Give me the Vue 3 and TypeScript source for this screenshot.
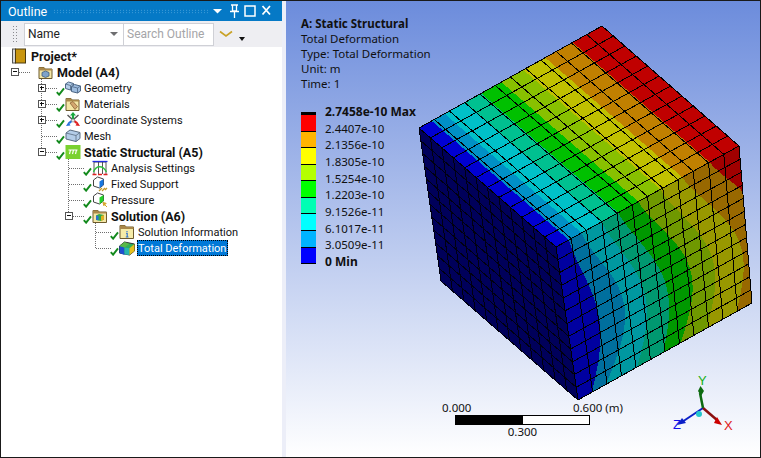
<template>
  <div class="window">
    <!-- Outline panel -->
    <aside class="outline">
      <header class="title-bar">
        <span class="title-text">Outline</span>
        <span class="title-grip" />
        <svg class="title-icons" width="62" height="18" viewBox="0 0 62 18">
          <path d="M0 7h9l-4.500 4.500z" fill="#fff" />
          <path d="M18 3h7M19.500 3v6h4V3M17 9.500h9M21.500 10v6" fill="none" stroke="#fff" stroke-width="1.300" />
          <rect x="32" y="4" width="10" height="10" fill="none" stroke="#fff" stroke-width="1.500" />
          <path d="M49.500 4l7.500 8.500M57 4l-7.500 8.500" stroke="#fff" stroke-width="1.800" />
        </svg>
      </header>

      <div class="toolbar">
        <span class="grip" />
        <div class="combo">
          <span>Name</span>
          <i class="combo-arrow" />
        </div>
        <div class="search">Search Outline</div>
        <svg class="chevron" width="14" height="8" viewBox="0 0 14 8">
          <path d="M1 1.500l6 4.500 6-4.500" fill="none" stroke="#c9a227" stroke-width="1.600" />
        </svg>
        <svg class="drop" width="8" height="4" viewBox="0 0 8 4">
          <path d="M1 0h6L4 4z" fill="#111" />
        </svg>
      </div>

      <div class="tree">
        <svg class="tree-guides" width="281" height="220">
          <line
            v-for="(g, i) in guides"
            :key="i"
            :x1="g.x1"
            :y1="g.y1"
            :x2="g.x2"
            :y2="g.y2"
            stroke="#6e6e6e"
            stroke-dasharray="1 1"
            shape-rendering="crispEdges"
          />
        </svg>

        <div
          v-for="row in rows"
          :key="row.label"
          class="row"
          :style="{ paddingLeft: rowIndent(row.depth) + 'px' }"
        >
          <span v-if="row.depth > 0" class="expander-slot">
            <span v-if="row.toggle" class="expander">
              <i class="bar-h" />
              <i v-if="row.toggle === 'plus'" class="bar-v" />
            </span>
          </span>
          <span v-if="row.depth > 0" class="check-slot">
            <svg v-if="row.done" width="9" height="9" viewBox="0 0 9 9">
              <path d="M0.800 5.200l2.300 2.500L8 1.300" fill="none" stroke="#138a1d" stroke-width="1.900" />
            </svg>
          </span>
          <span class="icon-slot">
            <svg width="16" height="16" viewBox="0 0 16 16">
              <g v-if="row.icon === 'project'">
                <rect x="0.500" y="1" width="3" height="14" fill="#d8d8d8" stroke="#555" />
                <rect x="3.500" y="1" width="10" height="14" fill="#c9960f" stroke="#4b3a10" />
              </g>
              <g v-else-if="row.icon === 'folder'">
                <path d="M1 3.500h5l1 1.500h7v9.500H1z" fill="#f4e6a6" stroke="#6d5a2c" />
                <path d="M1 3.500h5l1 1.500h7v1.500H1z" fill="#a9884a" />
                <path d="M7.500 7l3.500 1.500v3.500l-3.500 1.500L4 12V8.500z" fill="#7fa3c9" stroke="#3f5a78" stroke-width="0.800" />
              </g>
              <g v-else-if="row.icon === 'geometry'">
                <path d="M0.500 4l3-2 5 1.500v4.500l-3 2-5-1.500z" fill="#b4cde8" stroke="#4b6584" />
                <path d="M0.500 4l5 1.500 3-2M5.500 5.500V10" fill="none" stroke="#4b6584" stroke-width="0.800" />
                <path d="M6.500 6.500l3-2 6 1.500v5l-3 2-6-1.500z" fill="#9dbcdf" stroke="#4b6584" />
                <path d="M6.500 6.500l6 1.500 3-2M12.500 8v5" fill="none" stroke="#4b6584" stroke-width="0.800" />
              </g>
              <g v-else-if="row.icon === 'materials'">
                <path d="M1 2.500h5l1 1.500h7v10.500H1z" fill="#f4e6a6" stroke="#6d5a2c" />
                <path d="M1 2.500h5l1 1.500h7v1.500H1z" fill="#a9884a" />
                <path d="M5 7l3-1.500 4.500 5-2.500 3z" fill="#d3a66f" stroke="#8a6236" stroke-width="0.800" />
              </g>
              <g v-else-if="row.icon === 'axes'">
                <path d="M8 8L2.500 3M8 8l5.500-5" stroke="#555" stroke-width="1.400" />
                <path d="M8 8V2.500" stroke="#19a83e" stroke-width="2.200" />
                <path d="M8 0l3 3.500H5z" fill="#19a83e" />
                <path d="M8 8l4 3.200" stroke="#e01e1e" stroke-width="2.200" />
                <path d="M15 14l-4.500-.5 2-3.500z" fill="#e01e1e" />
                <path d="M8 8l-4 3.200" stroke="#2670d8" stroke-width="2.200" />
                <path d="M1 14l4.500-.5-2-3.500z" fill="#2670d8" />
                <circle cx="8" cy="8.500" r="1.600" fill="#e8e8e8" stroke="#777" stroke-width="0.500" />
              </g>
              <g v-else-if="row.icon === 'mesh'">
                <path d="M1 5l4-3 10 2.500v6l-4 3-10-2.500z" fill="#b4cde8" stroke="#5a6c80" />
                <path d="M1 5l10 2.500 4-3M11 7.500v6" fill="none" stroke="#5a6c80" stroke-width="0.800" />
              </g>
              <g v-else-if="row.icon === 'static'">
                <rect x="0.500" y="1" width="15" height="14" fill="#7ad12f" />
                <path d="M3.500 6h9M5.500 6l-1 4M8.500 6l-1 4M11.500 6l-1 4" fill="none" stroke="#fff" stroke-width="1.100" />
              </g>
              <g v-else-if="row.icon === 'analysis'">
                <path d="M2 2h12M2 2v12M6.500 2v12M10.500 2v12M14 2v12" fill="none" stroke="#444" stroke-width="0.900" />
                <path d="M0.500 1.500h15" stroke="#1f2ce0" stroke-width="1.300" />
                <path d="M0.500 14.500h4M6 14.500h4M11.500 14.500h4" stroke="#e02020" stroke-width="1.300" />
                <path d="M1.500 12C4 5 11 5 14.500 12" fill="none" stroke="#2bbf3d" stroke-width="1.400" />
              </g>
              <g v-else-if="row.icon === 'fixed'">
                <path d="M1.500 4l4-3 6 2v6l-4 3-6-2z" fill="#fff" stroke="#444" />
                <path d="M7.500 5.500l4-2.500v6l-4 3z" fill="#1776e0" />
                <path d="M7 15l3-3M10 15l3-3M13 14l2-2" stroke="#c49a2a" stroke-width="1.300" />
              </g>
              <g v-else-if="row.icon === 'pressure'">
                <path d="M1.500 4l4-3 6 2v6l-4 3-6-2z" fill="#fff" stroke="#444" />
                <path d="M7.500 5.500l4-2.500v6l-4 3z" fill="#23d12a" />
                <path d="M15 15l-3-3M11 10.500l3.200.8-2.400 2.400z" stroke="#d3a62a" fill="#d3a62a" />
              </g>
              <g v-else-if="row.icon === 'solution'">
                <path d="M1 2.500h5l1 1.500h7.500v10.500H1z" fill="#f4e6a6" stroke="#6d5a2c" />
                <path d="M1 2.500h5l1 1.500h7.500v1.500H1z" fill="#a9884a" />
                <path d="M4 7.500l3-1.500 5 1v4.500l-3 1.500-5-1z" fill="#2fa84a" />
                <path d="M9 8l3-1v4.500l-3 1.500z" fill="#e0b020" />
                <path d="M4 7.500l2.500.5v4.500l-2.500-1z" fill="#2a72d0" />
              </g>
              <g v-else-if="row.icon === 'info'">
                <path d="M1 1.500h5l1 1.500h7.500v11.500H1z" fill="#f6eca8" stroke="#6d5a2c" />
                <path d="M1 1.500h5l1 1.500h7.500v2H1z" fill="#a9884a" />
                <path d="M8 7v1M7 9.300h1.200v3.500M6.800 13h2.700" fill="none" stroke="#2a6fd0" stroke-width="1.100" />
              </g>
              <g v-else>
                <path d="M0.500 6l5-4 10 2v7l-5 4-10-2z" fill="#2fb05a" stroke="#333" />
                <path d="M0.500 6l5 1.500V15l-5-2z" fill="#1f4fd0" />
                <path d="M5.500 7.500l5 .8V15l-5-.5z" fill="#28b6b0" />
                <path d="M10.500 8.300l5-4.300v7l-5 4z" fill="#e6c01f" />
                <path d="M5.500 2l5 2-5 3.500-5-1.500z" fill="#5ab848" />
              </g>
            </svg>
          </span>
          <span class="label" :class="{ bold: row.bold, selected: row.selected }">{{ row.label }}</span>
        </div>
      </div>
    </aside>

    <div class="splitter" />

    <!-- Graphics viewport -->
    <main class="viewport">
      <svg class="model" viewBox="286 1 474 456" width="474" height="456">
        <polygon :points="pts(leftFace)" fill="#00005a" />
        <path :d="leftMesh" fill="none" stroke="#000010" stroke-width="1" shape-rendering="crispEdges" />

        <polygon
          v-for="band in topBands"
          :key="'t' + band.color"
          :points="band.points"
          :fill="band.color"
          shape-rendering="crispEdges"
        />
        <polygon
          v-for="band in rightBands"
          :key="'r' + band.color"
          :points="band.points"
          :fill="band.color"
          shape-rendering="crispEdges"
        />

        <path :d="meshPath" fill="none" stroke="#000" stroke-width="1" shape-rendering="crispEdges" />

        <!-- triad -->
        <path d="M703 408L682 422" stroke="#0a1fc8" stroke-width="2" />
        <path d="M677 425l5-7 4 5z" fill="#0a1fc8" />
        <path d="M703 408L717 420" stroke="#8a1010" stroke-width="2.500" />
        <path d="M722 425l-8-2 3-6z" fill="#cc0000" />
        <path d="M703 408L700 393" stroke="#0c6a10" stroke-width="2.500" />
        <path d="M700.500 386l3.500 5-3 5-3-5z" fill="#0c6a10" />
        <circle cx="699" cy="414" r="3" fill="#22c6cc" />
        <text class="axis" x="698" y="385" fill="#18b018">Y</text>
        <text class="axis" x="724" y="430" fill="#e01818">X</text>
        <text class="axis" x="673" y="429" fill="#1010e8">Z</text>
      </svg>

      <section class="annotation">
        <div class="anno-head">A: Static Structural</div>
        <div class="anno-line">Total Deformation</div>
        <div class="anno-line">Type: Total Deformation</div>
        <div class="anno-line">Unit: m</div>
        <div class="anno-line">Time: 1</div>

        <div class="legend">
          <div class="legend-bar">
            <span
              v-for="c in legendColors"
              :key="c"
              class="legend-cell"
              :style="{ background: c }"
            />
          </div>
          <div class="legend-labels">
            <span
              v-for="(l, i) in legendLabels"
              :key="l"
              class="legend-label"
              :class="{ bold: i === 0 || i === legendLabels.length - 1 }"
            >{{ l }}</span>
          </div>
        </div>
      </section>

      <section class="scale">
        <div class="scale-top">
          <span>0.000</span>
          <span>0.600 (m)</span>
        </div>
        <div class="scale-bar"><i /></div>
        <div class="scale-mid">0.300</div>
      </section>
    </main>
  </div>
</template>

<script setup lang="ts">
import { computed } from 'vue'

type Point = [number, number]
type Face = [Point, Point, Point, Point]

interface Row {
  label: string
  depth: number
  icon: string
  toggle?: 'plus' | 'minus'
  done?: boolean
  bold?: boolean
  selected?: boolean
}

const ROW_H = 16

const rows: Row[] = [
  { label: 'Project*', depth: 0, icon: 'project', bold: true },
  { label: 'Model (A4)', depth: 1, icon: 'folder', toggle: 'minus', bold: true },
  { label: 'Geometry', depth: 2, icon: 'geometry', toggle: 'plus', done: true },
  { label: 'Materials', depth: 2, icon: 'materials', toggle: 'plus', done: true },
  { label: 'Coordinate Systems', depth: 2, icon: 'axes', toggle: 'plus', done: true },
  { label: 'Mesh', depth: 2, icon: 'mesh', done: true },
  { label: 'Static Structural (A5)', depth: 2, icon: 'static', toggle: 'minus', done: true, bold: true },
  { label: 'Analysis Settings', depth: 3, icon: 'analysis', done: true },
  { label: 'Fixed Support', depth: 3, icon: 'fixed', done: true },
  { label: 'Pressure', depth: 3, icon: 'pressure', done: true },
  { label: 'Solution (A6)', depth: 3, icon: 'solution', toggle: 'minus', done: true, bold: true },
  { label: 'Solution Information', depth: 4, icon: 'info', done: true },
  { label: 'Total Deformation', depth: 4, icon: 'total', done: true, selected: true },
]

// x inside the panel, panel starts 1px in from the window edge
function rowIndent(depth: number) {
  return depth === 0 ? 11 : 10 + 27 * (depth - 1)
}

const guides = computed(() => {
  const out: { x1: number; y1: number; x2: number; y2: number }[] = []
  rows.forEach((row, i) => {
    const y = i * ROW_H + 8.5
    if (row.depth === 0) return
    const gx = 13.5 + 27 * (row.depth - 1)
    out.push({ x1: gx, y1: y, x2: gx + 15, y2: y })

    // vertical run down to the last direct child
    let last = -1
    for (let j = i + 1; j < rows.length && rows[j].depth > row.depth; j++) {
      if (rows[j].depth === row.depth + 1) last = j
    }
    if (last > 0) {
      out.push({ x1: gx + 27, y1: y + 6, x2: gx + 27, y2: last * ROW_H + 8.5 })
    }
  })
  return out
})

const legendColors = ['#ff0000', '#ffb400', '#ffff00', '#b4ff00', '#00ff00', '#00ffb4', '#00ffff', '#00b4ff', '#0000ff']
const legendLabels = [
  '2.7458e-10 Max',
  '2.4407e-10',
  '2.1356e-10',
  '1.8305e-10',
  '1.5254e-10',
  '1.2203e-10',
  '9.1526e-11',
  '6.1017e-11',
  '3.0509e-11',
  '0 Min',
]

// cube corners, in page coordinates
const leftFace: Face = [[419, 128], [556, 247], [578, 400], [441, 281]]
const topFace: Face = [[556, 247], [739, 146], [602, 26], [419, 128]]
const rightFace: Face = [[556, 247], [739, 146], [752, 303], [578, 400]]

const CELLS = 12

function lerp(a: Point, b: Point, t: number): Point {
  return [a[0] + (b[0] - a[0]) * t, a[1] + (b[1] - a[1]) * t]
}

// u runs p0 -> p1, v runs p0 -> p3
function at(f: Face, u: number, v: number): Point {
  return lerp(lerp(f[0], f[1], u), lerp(f[3], f[2], u), v)
}

function pts(list: Point[]) {
  return list.map((p) => `${p[0].toFixed(1)},${p[1].toFixed(1)}`).join(' ')
}

// band stops across the width of the part, blue side first.
// t is where the band ends at the top edge, end where it lands on the bottom edge
const stops = [
  { t: 0.07, end: 0.08, bulge: 0.095, top: '#0000d2', side: '#0000a0' },
  { t: 0.14, end: 0.16, bulge: 0.16, top: '#0090c6', side: '#006f9e' },
  { t: 0.25, end: 0.34, bulge: 0.125, top: '#00c0c8', side: '#0098a0' },
  { t: 0.34, end: 0.49, bulge: 0.115, top: '#00c090', side: '#009870' },
  { t: 0.45, end: 0.59, bulge: 0.15, top: '#00c000', side: '#009800' },
  { t: 0.57, end: 0.74, bulge: 0.135, top: '#88c000', side: '#6f9800' },
  { t: 0.69, end: 0.91, bulge: 0.14, top: '#c0c000', side: '#989800' },
  { t: 0.84, end: 1.1, bulge: 0.15, top: '#c08000', side: '#986800' },
  { t: 1.01, end: 1.1, bulge: 0, top: '#c00000', side: '#a00000' },
]

const topBands = computed(() =>
  [...stops].reverse().map((s) => ({
    color: s.top,
    points: pts([at(topFace, 0, 0), at(topFace, Math.min(s.t, 1), 0), at(topFace, Math.min(s.t, 1), 1), at(topFace, 0, 1)]),
  })),
)

const rightBands = computed(() =>
  [...stops].reverse().map((s) => {
    const curve: Point[] = []
    for (let i = 0; i <= 30; i++) {
      const v = i / 30
      const u = s.t + (s.end - s.t) * v + s.bulge * Math.sin(Math.PI * Math.pow(v, 1.3))
      curve.push(at(rightFace, Math.min(u, 1), v))
    }
    return { color: s.side, points: pts([rightFace[0], ...curve, rightFace[3]]) }
  }),
)

function gridPath(f: Face) {
  const parts: string[] = []
  const seg = (a: Point, b: Point) => parts.push(`M${a[0].toFixed(1)} ${a[1].toFixed(1)}L${b[0].toFixed(1)} ${b[1].toFixed(1)}`)
  for (let i = 0; i <= CELLS; i++) {
    const t = i / CELLS
    seg(at(f, t, 0), at(f, t, 1))
    seg(at(f, 0, t), at(f, 1, t))
  }
  return parts.join('')
}

const leftMesh = computed(() => gridPath(leftFace))
const meshPath = computed(() => gridPath(topFace) + gridPath(rightFace))
</script>

<style>
html,
body {
  margin: 0;
  background: #fff;
}
</style>

<style scoped>
.window {
  display: flex;
  width: 761px;
  height: 458px;
  box-sizing: border-box;
  border: 1px solid #1a1a1a;
  font-family: "Noto Sans", "Open Sans", sans-serif;
  font-size: 11px;
  color: #111;
  overflow: hidden;
}

/* Outline panel */

.outline {
  display: flex;
  flex-direction: column;
  width: 281px;
  flex-shrink: 0;
  background: #fff;
  font-family: Roboto, "Noto Sans", sans-serif;
}

.title-bar {
  display: flex;
  align-items: center;
  height: 20px;
  padding-left: 7px;
  background: #0579c6;
  color: #fff;
}

.title-text {
  font-size: 12.500px;
}

.title-grip {
  flex: 1;
  height: 5px;
  margin: 0 3px 0 6px;
  background-image: radial-gradient(#4aa3dc 0.6px, transparent 0.8px);
  background-size: 3px 2.500px;
}

.title-icons {
  margin-right: 7px;
}

.toolbar {
  display: flex;
  align-items: center;
  height: 26px;
  padding-left: 11px;
  background: #eeeef2;
}

.grip {
  width: 5px;
  height: 18px;
  margin-right: 7px;
  background-image: radial-gradient(#8b8b90 0.8px, transparent 1px);
  background-size: 3px 3px;
}

.combo,
.search {
  display: flex;
  align-items: center;
  box-sizing: border-box;
  height: 23px;
  border: 1px solid #cfd0d6;
  background: #fff;
  font-size: 12px;
}

.combo {
  justify-content: space-between;
  width: 100px;
  padding: 0 3px;
  color: #222;
}

.combo-arrow {
  width: 0;
  height: 0;
  margin-right: 2px;
  border: 4px solid transparent;
  border-top: 4px solid #6e6e70;
  border-bottom: 0;
}

.search {
  width: 90px;
  padding-left: 3px;
  border-left: 0;
  color: #a5a5a8;
}

.chevron {
  margin-left: 5px;
  margin-bottom: 1px;
}

.drop {
  margin: 9px 0 0 5px;
}

.tree {
  position: relative;
  flex: 1;
  padding-top: 1px;
}

.tree-guides {
  position: absolute;
  top: 1px;
  left: 0;
}

.row {
  position: relative;
  display: flex;
  align-items: center;
  height: 16px;
  font-size: 11px;
  white-space: nowrap;
}

.expander-slot {
  flex: 0 0 18px;
  display: flex;
  align-items: center;
}

.expander {
  position: relative;
  box-sizing: border-box;
  width: 8px;
  height: 8px;
  border: 1px solid #555;
  background: #fff;
}

.bar-h,
.bar-v {
  position: absolute;
  background: #111;
}

.bar-h {
  left: 1px;
  top: 2px;
  width: 4px;
  height: 1px;
}

.bar-v {
  left: 2px;
  top: 1px;
  width: 1px;
  height: 4px;
}

.check-slot {
  flex: 0 0 9px;
  height: 9px;
  margin-top: 7px;
}

.check-slot svg {
  display: block;
}

.icon-slot {
  flex: 0 0 19px;
  display: flex;
  align-items: center;
}

.label {
  padding-top: 2px;
  line-height: 14px;
}

.label.bold {
  font-size: 12.500px;
}

.bold,
.anno-head {
  font-weight: 700;
}

.selected {
  margin-left: -1px;
  padding: 2px 2px 0 1px;
  outline: 1px dotted #000;
  outline-offset: -1px;
  background: #0078d7;
  color: #fff;
}

.splitter {
  width: 4px;
  flex-shrink: 0;
  background: #eceef8;
}

/* Graphics viewport */

.viewport {
  position: relative;
  flex: 1;
  background: linear-gradient(#6c8cdc, #fff);
}

.model {
  display: block;
}

.axis {
  font-family: "Liberation Sans", sans-serif;
  font-size: 13px;
}

.annotation {
  position: absolute;
  top: 15px;
  left: 15px;
  font-size: 11.500px;
  line-height: 15px;
  color: #101010;
}

.legend {
  display: flex;
  margin-top: 13px;
}

.legend-bar {
  display: flex;
  flex-direction: column;
  box-sizing: border-box;
  width: 15px;
  height: 152px;
  margin-top: 8px;
  border-top: 2px solid #000;
  border-bottom: 1px solid #000;
}

.legend-cell {
  flex: 1;
  border-top: 1px solid #000;
}

.legend-labels {
  display: flex;
  flex-direction: column;
  margin-left: 9px;
}

.legend-label {
  height: 16.670px;
  line-height: 16.670px;
  white-space: nowrap;
}

.legend-label.bold {
  font-size: 12px;
}

.scale {
  position: absolute;
  top: 399px;
  left: 156px;
  width: 181px;
  font-size: 11.500px;
  color: #111;
}

.scale-top {
  display: flex;
  justify-content: space-between;
  height: 15px;
  line-height: 15px;
}

.scale-bar {
  box-sizing: border-box;
  width: 135px;
  height: 10px;
  margin-left: 13px;
  border: 1px solid #000;
  background: #fff;
}

.scale-bar i {
  display: block;
  width: 50%;
  height: 100%;
  background: #000;
}

.scale-mid {
  width: 135px;
  margin: -1px 0 0 13px;
  text-align: center;
  line-height: 15px;
}
</style>
